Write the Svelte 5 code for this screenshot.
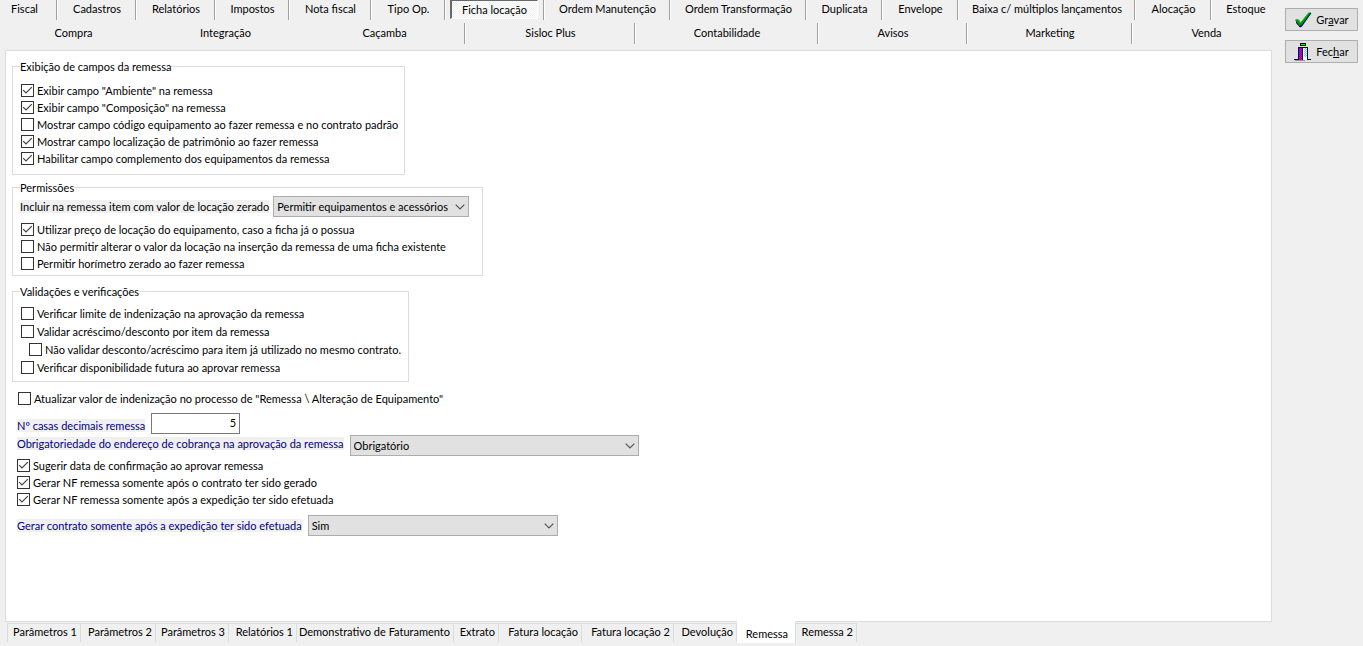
<script lang="ts">
  type Tab = { label: string; span: number; divider?: boolean }

  const modules: Tab[] = [
    { label: 'Fiscal', span: 58, divider: true },
    { label: 'Cadastros', span: 79, divider: true },
    { label: 'Relatórios', span: 79, divider: true },
    { label: 'Impostos', span: 74, divider: true },
    { label: 'Nota fiscal', span: 82, divider: true },
    { label: 'Tipo Op.', span: 74, divider: true },
    { label: 'Ficha locação', span: 99, divider: true },
    { label: 'Ordem Manutenção', span: 126, divider: true },
    { label: 'Ordem Transformação', span: 136, divider: true },
    { label: 'Duplicata', span: 76, divider: true },
    { label: 'Envelope', span: 76, divider: true },
    { label: 'Baixa c/ múltiplos lançamentos', span: 177, divider: true },
    { label: 'Alocação', span: 76, divider: true },
    { label: 'Estoque', span: 68 },
  ]

  const moreModules: Tab[] = [
    { label: 'Compra', span: 147 },
    { label: 'Integração', span: 157 },
    { label: 'Caçamba', span: 162, divider: true },
    { label: 'Sisloc Plus', span: 170, divider: true },
    { label: 'Contabilidade', span: 183, divider: true },
    { label: 'Avisos', span: 149, divider: true },
    { label: 'Marketing', span: 165, divider: true },
    { label: 'Venda', span: 147 },
  ]

  const pages = [
    { label: 'Parâmetros 1', width: 74 },
    { label: 'Parâmetros 2', width: 75 },
    { label: 'Parâmetros 3', width: 73 },
    { label: 'Relatórios 1', width: 68 },
    { label: 'Demonstrativo de Faturamento', width: 157 },
    { label: 'Extrato', width: 45 },
    { label: 'Fatura locação', width: 83 },
    { label: 'Fatura locação 2', width: 92 },
    { label: 'Devolução', width: 63 },
    { label: 'Remessa', width: 59 },
    { label: 'Remessa 2', width: 61 },
  ]

  let activeModule = $state('Ficha locação')
  let activePage = $state('Remessa')

  let display = $state([
    { label: 'Exibir campo "Ambiente" na remessa', checked: true },
    { label: 'Exibir campo "Composição" na remessa', checked: true },
    { label: 'Mostrar campo código equipamento ao fazer remessa e no contrato padrão', checked: false },
    { label: 'Mostrar campo localização de patrimônio ao fazer remessa', checked: true },
    { label: 'Habilitar campo complemento dos equipamentos da remessa', checked: true },
  ])

  let permissions = $state([
    { label: 'Utilizar preço de locação do equipamento, caso a ficha já o possua', checked: true },
    { label: 'Não permitir alterar o valor da locação na inserção da remessa de uma ficha existente', checked: false },
    { label: 'Permitir horímetro zerado ao fazer remessa', checked: false },
  ])

  let validations = $state([
    { label: 'Verificar limite de indenização na aprovação da remessa', checked: false },
    { label: 'Validar acréscimo/desconto por item da remessa', checked: false },
    { label: 'Não validar desconto/acréscimo para item já utilizado no mesmo contrato.', checked: false, nested: true },
    { label: 'Verificar disponibilidade futura ao aprovar remessa', checked: false },
  ])

  let shipping = $state([
    { label: 'Sugerir data de confirmação ao aprovar remessa', checked: true },
    { label: 'Gerar NF remessa somente após o contrato ter sido gerado', checked: true },
    { label: 'Gerar NF remessa somente após a expedição ter sido efetuada', checked: true },
  ])

  let updateIndemnity = $state(false)
  let decimals = $state('5')

  const columns = (tabs: Tab[]) => tabs.map((tab) => `${tab.span}fr`).join(' ')
</script>

{#snippet moduleRow(tabs: Tab[])}
  <div class="modules__row" style={`grid-template-columns: ${columns(tabs)};`}>
    {#each tabs as tab}
      <div class="modules__cell" class:modules__cell--divider={tab.divider}>
        <button
          type="button"
          class="modules__tab"
          class:modules__tab--active={tab.label === activeModule}
          onclick={() => (activeModule = tab.label)}
        >
          {tab.label}
        </button>
      </div>
    {/each}
  </div>
{/snippet}

{#snippet chevron()}
  <svg class="select__arrow" viewBox="0 0 10 6" aria-hidden="true">
    <path d="M0.7 0.7 L5 5 L9.3 0.7" fill="none" stroke="#555" stroke-width="1.2" />
  </svg>
{/snippet}

<div class="window">
  <main class="content">
    <nav class="modules">
      {@render moduleRow(modules)}
      {@render moduleRow(moreModules)}
    </nav>

    <section class="panel">
      <fieldset class="group group--display">
        <legend>Exibição de campos da remessa</legend>
        {#each display as option}
          <label class="check"><input type="checkbox" bind:checked={option.checked} />{option.label}</label>
        {/each}
      </fieldset>

      <fieldset class="group group--permissions">
        <legend>Permissões</legend>
        <div class="field">
          <label class="field__label field__label--plain" for="zero-value">Incluir na remessa item com valor de locação zerado</label>
          <div class="select select--narrow">
            <select id="zero-value">
              <option>Permitir equipamentos e acessórios</option>
            </select>
            {@render chevron()}
          </div>
        </div>
        {#each permissions as option}
          <label class="check"><input type="checkbox" bind:checked={option.checked} />{option.label}</label>
        {/each}
      </fieldset>

      <fieldset class="group group--validations">
        <legend>Validações e verificações</legend>
        {#each validations as option}
          <label class="check check--loose" class:check--nested={option.nested}>
            <input type="checkbox" bind:checked={option.checked} />{option.label}
          </label>
        {/each}
      </fieldset>

      <div class="general">
        <label class="check check--loose">
          <input type="checkbox" bind:checked={updateIndemnity} />Atualizar valor de indenização no processo de "Remessa \ Alteração de Equipamento"
        </label>

        <div class="field field--low">
          <label class="field__label" for="decimals">Nº casas decimais remessa</label>
          <input id="decimals" class="number" type="text" bind:value={decimals} />
        </div>

        <div class="field field--high">
          <label class="field__label" for="billing-address">Obrigatoriedade do endereço de cobrança na aprovação da remessa</label>
          <div class="select select--wide">
            <select id="billing-address">
              <option>Obrigatório</option>
            </select>
            {@render chevron()}
          </div>
        </div>

        {#each shipping as option}
          <label class="check"><input type="checkbox" bind:checked={option.checked} />{option.label}</label>
        {/each}

        <div class="field field--last">
          <label class="field__label" for="contract">Gerar contrato somente após a expedição ter sido efetuada</label>
          <div class="select select--medium">
            <select id="contract">
              <option>Sim</option>
            </select>
            {@render chevron()}
          </div>
        </div>
      </div>
    </section>

    <nav class="pages">
      {#each pages as page}
        <button
          type="button"
          class="pages__tab"
          class:pages__tab--active={page.label === activePage}
          style={`width: ${page.width}px;`}
          onclick={() => (activePage = page.label)}
        >
          {page.label}
        </button>
      {/each}
    </nav>
  </main>

  <aside class="actions">
    <button type="button" class="actions__btn">
      <svg class="actions__icon" viewBox="0 0 18 18" aria-hidden="true">
        <path d="M2 10 L5 9 L7.5 12.5 L15.5 2 L17.5 2 L8 15.5 L6 16.5 L2 12 Z" fill="#000080" />
        <path d="M1 9 L4 8 L6.5 11.5 L14.5 1.5 L17 1.5 L7.5 14 L5.5 15 Z" fill="#009000" />
        <path d="M1.5 9 L4 8.5 L6.5 12 L14.8 2" fill="none" stroke="#00d820" />
      </svg>
      <span>Gr<u>a</u>var</span>
    </button>
    <button type="button" class="actions__btn">
      <svg class="actions__icon" viewBox="0 0 18 18" shape-rendering="crispEdges" aria-hidden="true">
        <defs>
          <pattern id="door-dots" width="2" height="2" patternUnits="userSpaceOnUse">
            <path d="M0 0h1v1H0zM1 1h1v1H1z" fill="#40e0f0" />
          </pattern>
          <pattern id="door-weave" width="2" height="2" patternUnits="userSpaceOnUse">
            <path d="M0 0h1v1H0zM1 1h1v1H1z" fill="#800080" />
          </pattern>
        </defs>
        <path d="M6 0h6v3H6z" fill="#000" />
        <path d="M7 1h4v1H7z" fill="#00ff00" />
        <path d="M1 17h10v1H1z" fill="#909090" />
        <path d="M4 4h10v12h3v1h-4V5H5v12H0v-1h4z" fill="#000080" />
        <path d="M5 5h4v12H5z" fill="#e000c0" />
        <path d="M5 5h4v12H5z" fill="url(#door-weave)" />
        <path d="M9 5h4v12H9z" fill="#fff" />
        <path d="M10 5h3v9h-3z" fill="url(#door-dots)" />
        <path d="M8 5h1v12H8z" fill="#000080" />
      </svg>
      <span>Fec<u>h</u>ar</span>
    </button>
  </aside>
</div>

<style>
  :global(body) {
    background: #f0f0f0;
  }

  .window {
    display: flex;
    min-height: 100vh;
    font-family: Lato, 'Liberation Sans', sans-serif;
    font-size: 11px;
    line-height: 13px;
    color: #000;
  }

  button,
  input,
  select {
    margin: 0;
    font: inherit;
    color: inherit;
  }

  .content {
    flex: 1;
    min-width: 0;
    display: flex;
    flex-direction: column;
  }

  .modules {
    display: flex;
    flex-direction: column;
    gap: 3px;
    margin-bottom: 6px;
  }

  .modules__row {
    display: grid;
  }

  .modules__row:first-child .modules__cell:first-child {
    padding-right: 8px;
  }

  .modules__cell {
    display: flex;
    box-sizing: border-box;
    height: 20px;
  }

  .modules__row:last-child .modules__cell {
    height: 21px;
  }

  .modules__cell--divider {
    border-right: 1px solid #fff;
    box-shadow: inset -1px 0 #a0a0a0;
  }

  .modules__tab {
    flex: 1;
    min-width: 0;
    padding: 0 0 3px;
    border: 0;
    background: none;
    white-space: nowrap;
  }

  .modules__tab--active {
    margin: 0 6px 1px 4px;
    padding-bottom: 0;
    border: 1px solid #fff;
    border-top: 1px solid #696969;
    border-left: 2px solid #696969;
    background: repeating-conic-gradient(#fff 0% 25%, #f0f0f0 0% 50%) 0 0 / 2px 2px;
  }

  .panel {
    flex: 1;
    margin: 0 8px 0 5px;
    padding: 9px 6px;
    border: 1px solid #dcdcdc;
    background: #fff;
  }

  .group {
    box-sizing: border-box;
    max-width: 100%;
    min-width: 0;
    margin: 0;
    border: 1px solid #dcdcdc;
  }

  .group legend {
    padding: 0;
  }

  .group--display {
    width: 393px;
    padding: 9px 7px 7px;
  }

  .group--permissions {
    width: 471px;
    margin-top: 6px;
    padding: 2px 7px 3px;
  }

  .group--permissions .field {
    margin-bottom: 4px;
  }

  .group--validations {
    width: 397px;
    margin-top: 9px;
    padding: 6px 7px 5px;
  }

  .check {
    display: flex;
    align-items: center;
    gap: 3px;
    width: fit-content;
    height: 17px;
    padding-left: 1px;
    white-space: nowrap;
  }

  .check--loose {
    height: 18px;
  }

  .check--nested {
    padding-left: 9px;
  }

  .check input {
    appearance: none;
    box-sizing: border-box;
    width: 13px;
    height: 13px;
    border: 1px solid #333;
    background: #fff;
  }

  .check input:checked {
    background: url("data:image/svg+xml,%3Csvg xmlns='http://www.w3.org/2000/svg' viewBox='0 0 11 11'%3E%3Cpath d='M1.2 5.2 4 8 9.8 2.2' fill='none' stroke='%23444' stroke-width='1.2'/%3E%3C/svg%3E") center / 11px 11px no-repeat;
  }

  .general {
    margin-top: 7px;
    padding-left: 5px;
  }

  .general .check {
    padding-left: 0;
  }

  .general .check--loose {
    padding-left: 1px;
  }

  .field {
    display: flex;
    align-items: center;
    gap: 6px;
  }

  .group .field {
    gap: 4px;
  }

  .field--low {
    align-items: flex-end;
    margin: 6px 0 1px;
  }

  .field--low .field__label {
    margin-bottom: 2px;
  }

  .field--high {
    align-items: flex-start;
    margin-bottom: 1px;
  }

  .field--high .field__label {
    margin-top: 2px;
  }

  .field--last {
    margin-top: 7px;
  }

  .field__label {
    background: #f0f0f0;
    color: #000080;
    white-space: nowrap;
  }

  .field__label--plain {
    color: #000;
  }

  .number {
    box-sizing: border-box;
    width: 89px;
    height: 21px;
    padding: 0 3px 2px;
    border: 1px solid #7a7a7a;
    background: #fff;
    text-align: right;
  }

  .select {
    position: relative;
    flex-shrink: 0;
  }

  .select select {
    display: block;
    appearance: none;
    box-sizing: border-box;
    width: 100%;
    height: 21px;
    padding: 0 18px 0 3px;
    border: 1px solid #adadad;
    border-radius: 0;
    background: #e1e1e1;
  }

  .select--narrow {
    width: 196px;
  }

  .select--medium {
    width: 250px;
  }

  .select--wide {
    width: 289px;
  }

  .select__arrow {
    position: absolute;
    top: 8px;
    right: 4px;
    width: 10px;
    height: 6px;
    pointer-events: none;
  }

  .pages {
    display: flex;
    height: 24px;
    padding-left: 7px;
  }

  .pages__tab {
    box-sizing: border-box;
    height: 19px;
    margin-top: 1px;
    padding: 0 3px 3px 0;
    border: 0;
    border-top: 1px solid #dcdcdc;
    border-right: 1px solid #dcdcdc;
    background: none;
    text-align: right;
    white-space: nowrap;
  }

  .pages__tab:first-child {
    border-left: 1px solid #dcdcdc;
  }

  .pages__tab--active {
    height: 22px;
    margin-top: -1px;
    padding: 2px 7px 0 0;
    border-top-color: #fff;
    background: #fff;
  }

  .actions {
    display: flex;
    flex-direction: column;
    gap: 9px;
    width: 73px;
    padding: 8px 5px;
  }

  .actions__btn {
    display: flex;
    align-items: center;
    justify-content: center;
    gap: 4px;
    height: 23px;
    padding: 0;
    border: 1px solid #adadad;
    background: #e1e1e1;
  }

  .actions__icon {
    width: 18px;
    height: 18px;
  }
</style>
